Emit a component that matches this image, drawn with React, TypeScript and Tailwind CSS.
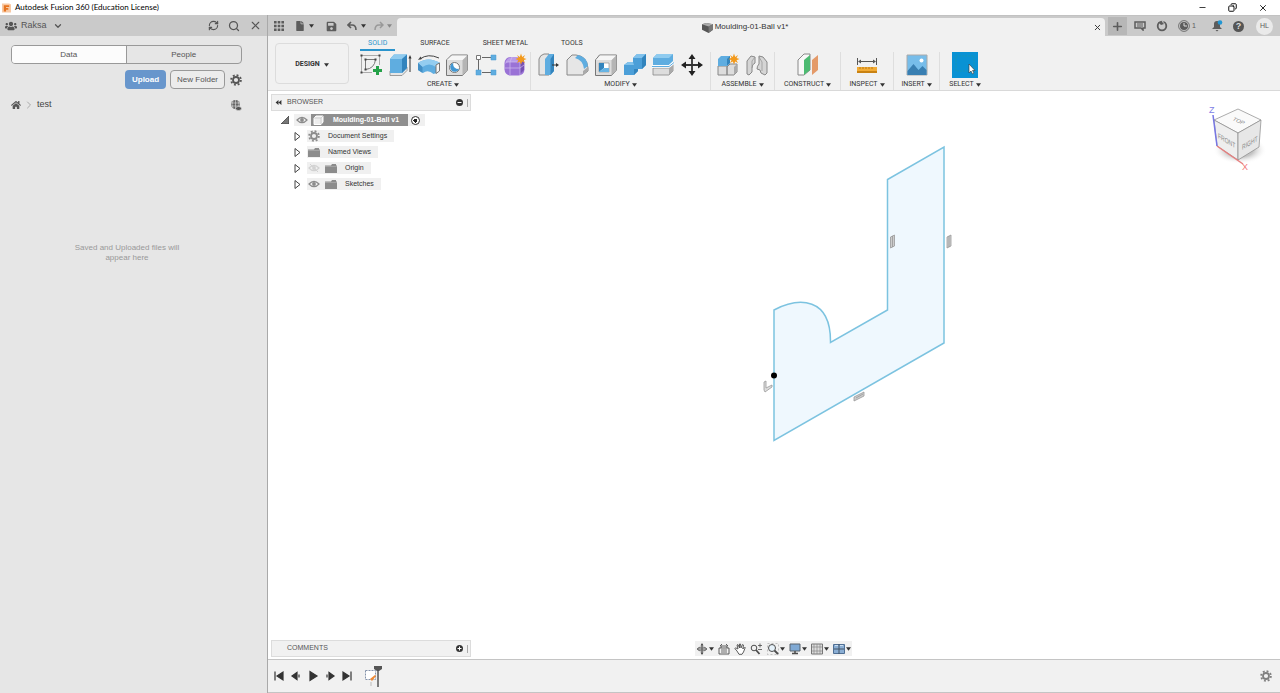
import type { ReactNode } from "react";
import { FaFile, FaHome, FaSave, FaUsers } from "react-icons/fa";
import { ChevronDown, ChevronRight, Copy, Minus, Plus, RefreshCw, Search, X } from "lucide-react";

interface ToolGroupData {
  label: string;
  width: string;
  cols: string;
  tools: { name: string; icon: ReactNode }[];
}

const BLUE = "#5fade0";
const DARK = "#4d4d4d";

const Icon = ({ children, className = "h-6 w-6", box = "0 0 24 24" }: { children: ReactNode; className?: string; box?: string }) => (
  <svg viewBox={box} className={className} fill="none" aria-hidden="true">
    {children}
  </svg>
);

const Caret = ({ className = "text-[#333]" }: { className?: string }) => (
  <Icon box="0 0 6 4" className={`h-1 w-[5px] shrink-0 ${className}`}>
    <path d="M0 0h6L3 4z" fill="currentColor" />
  </Icon>
);

const Gear = ({ className }: { className: string }) => (
  <Icon box="0 0 12 12" className={className}>
    <circle cx="6" cy="6" r="3" stroke="currentColor" strokeWidth="1.8" />
    <circle cx="6" cy="6" r="4.9" stroke="currentColor" strokeWidth="1.8" strokeDasharray="1.9 1.95" />
  </Icon>
);

const Eye = ({ off = false }: { off?: boolean }) => (
  <Icon box="0 0 12 8" className={`h-2 w-3 shrink-0 ${off ? "text-[#d2d2d2]" : "text-[#8b8b8b]"}`}>
    <path d="M1 4Q6-1.4 11 4Q6 9.4 1 4z" stroke="currentColor" strokeWidth="1.2" />
    <circle cx="6" cy="4" r="1.9" fill="currentColor" />
    {off && <path d="M2 0l8 8" stroke="currentColor" />}
  </Icon>
);

const Folder = () => (
  <Icon box="0 0 12 9" className="h-[9px] w-3 shrink-0">
    <path d="M0 1.5h6L7 0h4v1.5h1V9H0z" fill="#8c8c8c" />
    <path d="M0 2.5h12" stroke="#b5b5b5" strokeWidth=".6" />
  </Icon>
);

const Spark = ({ x, y }: { x: number; y: number }) => (
  <path
    transform={`translate(${x} ${y})`}
    d="M0-5.5 1.2-2 4-4 2.5-1 5.5 0 2.5 1.2 4 4 1.2 2.5 0 5.5-1.2 2.5-4 4-2.5 1.2-5.5 0-2.5-1.2-4-4-1.2-2z"
    fill="#f39a1c"
  />
);

const groups: ToolGroupData[] = [
  {
    label: "CREATE",
    width: "w-[175px]",
    cols: "grid-cols-6 w-[172px]",
    tools: [
      {
        name: "Create Sketch",
        icon: (
          <Icon>
            <path d="M2.500 2.500h18v17h-18z" stroke="#999" strokeWidth=".8" />
            <path d="M6.500 6.500v10q9-1 10-10z" stroke="#777" />
            <path d="M1.500 1.500h2v2h-2zM19.500 1.500h2v2h-2zM1.500 18.500h2v2h-2zM5.500 5.500h2v2h-2zM5.500 15.500h2v2h-2zM15.500 5.500h2v2h-2z" fill="#444" />
            <path d="M18.500 12v11M13 17.500h11" stroke="#f1f1f1" strokeWidth="5" />
            <path d="M18.500 13v9M14 17.500h9" stroke="#24a148" strokeWidth="3" />
          </Icon>
        ),
      },
      {
        name: "Extrude",
        icon: (
          <Icon>
            <path d="M2 18v4.500h12l5-5V14z" fill="#e6e6e6" stroke="#888" strokeWidth=".8" />
            <path d="M2 6l4-4.500h13v13.500l-5 5H2z" fill={BLUE} />
            <path d="M2 6l4-4.500h13L14 6z" fill="#8fcbef" />
            <path d="M14 6l5-4.500v13.500l-5 5z" fill="#3284bd" />
            <path d="M22 19V4" stroke="#333" />
            <path d="M20.500 5.500L22 2l1.500 3.500z" fill="#333" />
          </Icon>
        ),
      },
      {
        name: "Revolve",
        icon: (
          <Icon>
            <path d="M3 6Q11 0 22 5" stroke="#444" />
            <path d="M1 7l2.500-3.500L5 6z" fill="#444" />
            <path d="M1 10Q11 3 23 10l-3.500 4v6l-3 1Q11 16 6 20L1 17z" fill={BLUE} />
            <path d="M1 10Q11 3 23 10l-4 4Q12 9 5.500 14z" fill="#94cdf0" />
            <path d="M5.500 14v6L1 17v-7z" fill="#438fc5" />
            <path d="M19 12l3.500-2v8L19 20.500z" fill="#f5f5f5" stroke="#777" />
          </Icon>
        ),
      },
      {
        name: "Hole",
        icon: (
          <Icon>
            <path d="M1.500 7l5-5h16v15l-5 5.500h-16z" fill="#ddd" stroke="#777" />
            <path d="M17.500 7l5-5v15l-5 5.500z" fill="#b5b5b5" />
            <path d="M2 7l5-4.500h15L17.500 7z" fill="#f6f6f6" />
            <circle cx="9.500" cy="14.500" r="5" fill="#fff" stroke="#777" />
            <path d="M8 10a4.600 4.600 0 1 0 6 6Q8 16 8 10z" fill="#4297d2" />
          </Icon>
        ),
      },
      {
        name: "Rectangular Pattern",
        icon: (
          <Icon>
            <path d="M4.500 7v10M8 4.500h9M8 19.500h9" stroke="#666" />
            <path d="M2.500 2.500h4v4h-4z" fill="#fff" stroke="#777" />
            <path d="M17 2h5v5h-5zM17 17h5v5h-5zM2 17h5v5H2z" fill={BLUE} stroke="#4a9bd2" strokeWidth=".5" />
          </Icon>
        ),
      },
      {
        name: "Create Form",
        icon: (
          <Icon>
            <rect x="1.500" y="4" width="20" height="18.500" rx="6" fill="#9a72d6" />
            <path d="M2 11Q3 5 9 4h8l-3 5H5z" fill="#b99be8" />
            <path d="M17 9l4-3v11l-4 4z" fill="#7651b3" />
            <path d="M2 15h15l4-3M9 4L7 9v13M17 9v13M3 9h14" stroke="#d1bdf0" strokeWidth=".7" />
            <Spark x={18} y={6} />
          </Icon>
        ),
      },
    ],
  },
  {
    label: "MODIFY",
    width: "w-[180px]",
    cols: "grid-cols-6 w-[172px]",
    tools: [
      {
        name: "Press Pull",
        icon: (
          <Icon>
            <path d="M2 6q1-4 5-5h5v21H2z" fill="#e5e5e5" stroke="#888" />
            <path d="M8 6l4-5h5v17l-3.500 4H8z" fill={BLUE} />
            <path d="M13.500 6L17 1v17l-3.500 4z" fill="#3284bd" />
            <path d="M15 12h5" stroke="#333" />
            <path d="M19 10l3 2-3 2z" fill="#333" />
          </Icon>
        ),
      },
      {
        name: "Fillet",
        icon: (
          <Icon>
            <path d="M2 7l5-5h4q11 1 12 13v3l-5 4H2z" fill="#e6e6e6" stroke="#888" />
            <path d="M18 18v4l5-4v-4z" fill="#aaa" />
            <path d="M10 5l3-3q9 2 10 11l-4 3Q18 7 10 5z" fill={BLUE} />
          </Icon>
        ),
      },
      {
        name: "Shell",
        icon: (
          <Icon>
            <path d="M1.500 7l4-5h17v15l-5 5.500h-16z" fill="#ddd" stroke="#777" />
            <path d="M17.500 7l5-5v15l-5 5.500z" fill="#b5b5b5" />
            <path d="M2 7l4-4.500h16L17.500 7z" fill="#f6f6f6" />
            <path d="M5 10h10v9H5z" fill="#fff" stroke="#888" strokeWidth=".6" />
            <path d="M5 10l5 0v5l-5 4z" fill="#3284bd" />
            <path d="M5 19l5-4h5v4z" fill="#66b4e4" />
          </Icon>
        ),
      },
      {
        name: "Combine",
        icon: (
          <Icon>
            <path d="M1 12l4-3h5V5l4-4h9v11l-4 4h-4v2l-4 4H1z" fill="#4c9fd8" />
            <path d="M1 12l4-3h5l1 3zM10 5l4-4h9l-4 4z" fill="#81c2ec" />
            <path d="M19 5l4-4v11l-4 4zM15 16v2l-4 4v-6z" fill="#3284bd" />
          </Icon>
        ),
      },
      {
        name: "Split Body",
        icon: (
          <Icon>
            <path d="M2 5l4-4h16v7l-4 4H2z" fill={BLUE} />
            <path d="M2 5l4-4h16l-4 4z" fill="#8fcbef" />
            <path d="M2 15h16l4-4v7l-4 4H2z" fill="#ddd" stroke="#888" strokeWidth=".8" />
            <path d="M18 15l4-4v7l-4 4z" fill="#aaa" />
            <path d="M1 13.500h17l5-4" stroke="#fff" strokeWidth="2.500" />
            <path d="M1 13.500h17l5-4" stroke={BLUE} strokeWidth="1" />
          </Icon>
        ),
      },
      {
        name: "Move/Copy",
        icon: (
          <Icon>
            <path d="M12 4v16M4 12h16" stroke="#333" strokeWidth="1.800" />
            <path d="M8.500 6L12 1l3.500 5zM8.500 18l3.500 5 3.500-5zM6 8.500L1 12l5 3.500zM18 8.500l5 3.500-5 3.500z" fill="#222" />
          </Icon>
        ),
      },
    ],
  },
  {
    label: "ASSEMBLE",
    width: "w-16",
    cols: "grid-cols-2 w-[58px]",
    tools: [
      {
        name: "New Component",
        icon: (
          <Icon>
            <path d="M2 13h9v9H2zM11 14l3-3h7v8l-3 3h-7z" fill="#ddd" stroke="#888" />
            <path d="M18 14l3-3v8l-3 3z" fill="#aaa" />
            <path d="M2 6l3-3h9v7l-3 3H2z" fill={BLUE} />
            <path d="M11 6l3-3v7l-3 3z" fill="#3284bd" />
            <Spark x={18} y={6} />
          </Icon>
        ),
      },
      {
        name: "Joint",
        icon: (
          <Icon>
            <path d="M2 8l4-5 4 1v6q-3 1-3 5v4l-3 3-2-1z" fill="#d5d5d5" stroke="#888" />
            <path d="M22 9l-4-5-4-1v8q-2 2-2 5l3 1 1 3 4 2 2-2z" fill="#d5d5d5" stroke="#888" />
            <path d="M10 4L7 8v7M14 4l3 5v9" stroke="#999" strokeWidth=".8" />
          </Icon>
        ),
      },
    ],
  },
  {
    label: "CONSTRUCT",
    width: "w-[66px]",
    cols: "grid-cols-1 w-8",
    tools: [
      {
        name: "Offset Plane",
        icon: (
          <Icon>
            <path d="M2 7l6-6h6v16l-6 5H2z" fill="#f8f8f8" stroke="#888" />
            <path d="M8 7l6-5v15l-6 5z" fill="#4dbb72" />
            <path d="M16 7l6-5v15l-6 5z" fill="#e49a69" />
          </Icon>
        ),
      },
    ],
  },
  {
    label: "INSPECT",
    width: "w-[53px]",
    cols: "grid-cols-1 w-8",
    tools: [
      {
        name: "Measure",
        icon: (
          <Icon>
            <path d="M2.500 5v7M21.500 5v7M4 8.500h16" stroke="#555" />
            <path d="M3 8.500l3-2v4zM21 8.500l-3-2v4z" fill="#555" />
            <path d="M2 14h20v5H2z" fill="#f2ab35" />
            <path d="M2 18h20v2H2z" fill="#c98212" />
            <path d="M5 14v2M8 14v2M11 14v2M14 14v2M17 14v2" stroke="#a86505" strokeWidth=".7" />
          </Icon>
        ),
      },
    ],
  },
  {
    label: "INSERT",
    width: "w-[46px]",
    cols: "grid-cols-1 w-8",
    tools: [
      {
        name: "Insert Image",
        icon: (
          <Icon>
            <path d="M2 2h20v20H2z" fill="#77bdea" stroke="#aaa" />
            <path d="M2.500 18l6-7 5 6 4-4 4 4v5h-19z" fill="#397fb2" />
            <circle cx="16.500" cy="7.500" r="2" fill="#fff" />
          </Icon>
        ),
      },
    ],
  },
  {
    label: "SELECT",
    width: "w-[50px]",
    cols: "grid-cols-1 w-8",
    tools: [
      {
        name: "Select",
        icon: (
          <Icon className="h-[26px] w-[26px]" box="0 0 26 26">
            <path d="M0 0h26v26H0z" fill="#0992d4" />
            <path d="M4 4h18v15H4z" stroke="#1695b8" strokeDasharray="2 1" />
            <path d="M17 12v9l2-2 1.500 3 1.500-1-1.500-2.500H23z" fill="#fff" stroke="#333" strokeWidth=".6" />
          </Icon>
        ),
      },
    ],
  },
];

const treeRows = [
  { label: "Document Settings", icon: <Gear className="h-3 w-3 text-[#8c8c8c]" />, eye: "" },
  { label: "Named Views", icon: <Folder />, eye: "" },
  { label: "Origin", icon: <Folder />, eye: "off" },
  { label: "Sketches", icon: <Folder />, eye: "on" },
];

function TitleBar() {
  return (
    <header className="flex h-[15px] shrink-0 items-center bg-white pl-[2px] font-['Lato',sans-serif] text-black">
      <Icon box="0 0 10 10" className="mr-1 h-[10px] w-[9px]">
        <path d="M0 0h8l2 1v9H0z" fill="#f8c9a4" />
        <path d="M2 9V2h6v2H4.500v1H7v2H4.500v2z" fill="#e67420" />
      </Icon>
      <h1 className="flex-1 whitespace-nowrap text-[8px] leading-[15px]">Autodesk Fusion 360 (Education License)</h1>
      <div className="flex items-center gap-[21px] pr-3">
        <button aria-label="Minimize"><Minus size={9} strokeWidth={2} /></button>
        <button aria-label="Restore"><Copy size={9} strokeWidth={2.500} className="-scale-x-100" /></button>
        <button aria-label="Close"><X size={10} strokeWidth={2} /></button>
      </div>
    </header>
  );
}

function DataPanel() {
  return (
    <aside className="flex w-[268px] shrink-0 flex-col border-r border-[#a9a9a9] bg-[#e6e6e6] text-[8px] text-[#555]">
      <div className="flex h-[21px] items-center bg-[#cacaca] pl-[5px] pr-[5px]">
        <button className="flex items-center text-[9px]">
          <FaUsers size={12} className="mr-1" />
          Raksa
          <ChevronDown size={10} strokeWidth={3} className="ml-[6px]" />
        </button>
        <div className="ml-auto flex items-center gap-[9px]">
          <button aria-label="Refresh"><RefreshCw size={11} strokeWidth={2.500} /></button>
          <button aria-label="Search"><Search size={12} strokeWidth={2.500} /></button>
          <button aria-label="Close panel"><X size={13} strokeWidth={2} /></button>
        </div>
      </div>
      <div className="flex flex-col pl-[11px] pr-[25px] pt-[9px]">
        <div className="grid h-[19px] grid-cols-2 overflow-hidden rounded-sm border border-[#999]">
          <button className="border-r border-[#999] bg-[#fcfcfc]">Data</button>
          <button>People</button>
        </div>
        <div className="mt-[6px] flex items-center justify-end">
          <button className="h-[19px] rounded-sm bg-[#6896cc] px-[7px] font-bold text-white">Upload</button>
          <button className="ml-1 h-[19px] rounded-sm border border-[#999] bg-[#ececec] px-[6px]">New Folder</button>
          <button aria-label="Settings" className="ml-[5px]"><Gear className="h-3 w-3 text-[#555]" /></button>
        </div>
        <nav className="mt-2 flex h-4 items-center">
          <a href="#home" aria-label="Home"><FaHome size={10} /></a>
          <ChevronRight size={12} className="mx-[2px] text-[#aaa]" />
          <a href="#test" className="text-[9px] text-[#444]">test</a>
          <button aria-label="Open on the web" className="ml-auto">
            <Icon box="0 0 12 12" className="h-3 w-3">
              <circle cx="5.500" cy="5.500" r="4.500" fill="#666" />
              <path d="M1 4h9M1 7h9M5.500 1v9M3 2q-2 3.500 0 7M8 2q2 3.500 0 7" stroke="#ddd" strokeWidth=".6" />
              <ellipse cx="8.500" cy="9.500" rx="3" ry="2" fill="#555" stroke="#e6e6e6" strokeWidth=".6" />
            </Icon>
          </button>
        </nav>
      </div>
      <p className="mt-[130px] self-center pr-[13px] text-center leading-[10px] text-[#999]">
        Saved and Uploaded files will
        <br />
        appear here
      </p>
    </aside>
  );
}

function DocumentBar() {
  return (
    <div className="flex h-[21px] shrink-0 items-end border-t border-[#c2c2c2] bg-[#cacaca] text-[#5c5c5c]">
      <div className="flex h-5 w-[129px] items-center pl-[6px]">
        <button aria-label="Show data panel">
          <Icon box="0 0 10 10" className="h-[10px] w-[10px]">
            <path d="M0 0h2.600v2.600H0zM3.700 0h2.600v2.600H3.700zM7.400 0H10v2.600H7.400zM0 3.700h2.600v2.600H0zM3.700 3.700h2.600v2.600H3.700zM7.400 3.700H10v2.600H7.400zM0 7.400h2.600V10H0zM3.700 7.400h2.600V10H3.700zM7.400 7.400H10V10H7.400z" fill="#5c5c5c" />
          </Icon>
        </button>
        <button aria-label="File" className="ml-[11px] flex items-center gap-1"><FaFile size={10} /><Caret /></button>
        <button aria-label="Save" className="ml-3"><FaSave size={11} /></button>
        <button aria-label="Undo" className="ml-[10px] flex items-center gap-1">
          <Icon box="0 0 10 10" className="h-[10px] w-[10px]"><path d="M4 1L1 4l3 3M1.500 4H5q4 0 4 5" stroke="currentColor" strokeWidth="1.600" /></Icon>
          <Caret />
        </button>
        <button aria-label="Redo" className="ml-2 flex items-center gap-[3px] text-[#999]">
          <Icon box="0 0 10 10" className="h-[10px] w-[10px]"><path d="M6 1l3 3-3 3M8.500 4H5Q1 4 1 9" stroke="currentColor" strokeWidth="1.500" /></Icon>
          <Caret className="text-[#888]" />
        </button>
      </div>
      <div className="flex h-[18px] flex-1 items-center rounded-t-sm bg-[#f1f1f1] pr-[3px] text-[8px] text-[#333]">
        <div className="flex flex-1 items-center justify-center gap-[2px]">
          <Icon box="0 0 10 10" className="h-[11px] w-[11px]">
            <path d="M0 2l4-1 6 1v5L6 10 0 7z" fill="#555" />
            <path d="M0 2l4-1 6 1-4 2z" fill="#aaa" />
            <path d="M6 4l4-2v5l-4 3z" fill="#777" />
          </Icon>
          Moulding-01-Ball v1*
        </div>
        <button aria-label="Close document"><X size={9} strokeWidth={2.500} /></button>
      </div>
      <div className="flex h-5 items-center pl-[3px] pr-[7px]">
        <button aria-label="New design" className="flex h-[18px] w-[19px] items-center justify-center bg-[#b7b7b7]"><Plus size={13} strokeWidth={3} /></button>
        <button aria-label="Notifications" className="ml-[7px]">
          <Icon box="0 0 12 10" className="h-[10px] w-3">
            <path d="M1 1h10v6H9v2L7 7H1z" stroke="currentColor" strokeWidth="1.500" />
            <path d="M3 3h6M3 5h6" stroke="currentColor" />
          </Icon>
        </button>
        <button aria-label="Extensions" className="ml-[10px]">
          <Icon box="0 0 12 12" className="h-3 w-3">
            <circle cx="6" cy="6" r="4.300" stroke="currentColor" strokeWidth="1.800" />
            <path d="M2 2h4l2 2-3 1z" fill="currentColor" />
            <path d="M6 .500l1.500 2" stroke="#cacaca" strokeWidth="1.200" />
          </Icon>
        </button>
        <button aria-label="Job status" className="ml-[10px] flex items-center gap-[2px] text-[7px]">
          <Icon box="0 0 12 12" className="h-3 w-3">
            <circle cx="6" cy="6" r="5.400" stroke="currentColor" strokeWidth=".8" />
            <circle cx="6" cy="6" r="4" fill="currentColor" />
            <path d="M6 3v3h3" stroke="#ddd" />
          </Icon>
          1
        </button>
        <button aria-label="Alerts" className="ml-[15px]">
          <Icon box="0 0 12 12" className="h-3 w-3">
            <path d="M1 9l2-2V4q0-3 3-3t3 3v3l2 2zM4.500 10h3L6 11.500z" fill="currentColor" />
            <circle cx="9" cy="2.500" r="2.300" fill="#2196d3" />
          </Icon>
        </button>
        <button aria-label="Help" className="ml-[10px] flex h-[11px] w-[11px] items-center justify-center rounded-full bg-[#555] text-[9px] font-bold leading-none text-[#ddd]">?</button>
        <button aria-label="Account" className="ml-3 flex h-[17px] w-[17px] items-center justify-center rounded-full bg-[#eaeaea] text-[7px]">HL</button>
      </div>
    </div>
  );
}

function Toolbar() {
  return (
    <div className="flex h-[55px] shrink-0 border-b border-[#d9d9d9] bg-[#f1f1f1] font-['Roboto',sans-serif] text-[7px] text-[#333]">
      <button className="ml-[7px] mt-[7px] flex h-[41px] w-[74px] items-center justify-center gap-1 rounded-sm border border-[#dcdcdc] pt-[2px] font-bold">
        DESIGN <Caret />
      </button>
      <div className="ml-[7px] flex flex-col">
        <nav className="ml-1 flex h-4 gap-[17px]">
          <button className="border-b-2 border-[#2b94cc] px-2 pt-[2px] text-[#2b94cc]">SOLID</button>
          <button className="border-b-2 border-transparent px-2 pt-[2px]">SURFACE</button>
          <button className="border-b-2 border-transparent px-2 pt-[2px]">SHEET METAL</button>
          <button className="border-b-2 border-transparent px-2 pt-[2px]">TOOLS</button>
        </nav>
        <div className="mt-[1px] flex">
          {groups.map((group, i) => (
            <div key={group.label} className={`flex flex-col items-center ${group.width} ${i < groups.length - 1 ? "border-r border-[#dedede]" : ""}`}>
              <div className={`grid h-[26px] place-items-center ${group.cols}`}>
                {group.tools.map((tool) => (
                  <button key={tool.name} aria-label={tool.name}>{tool.icon}</button>
                ))}
              </div>
              <button className="flex h-3 items-center gap-[2px] pt-[1px]">{group.label} <Caret /></button>
            </div>
          ))}
        </div>
      </div>
    </div>
  );
}

function PanelHeader({ title, open }: { title: string; open: boolean }) {
  return (
    <div className="flex h-[17px] w-[200px] items-center border border-[#dcdcdc] bg-[#f1f1f1] text-[7px] text-[#555]">
      <span className="w-[15px] pl-[3px]">
        {open && (
          <Icon box="0 0 7 6" className="h-[5px] w-[7px]"><path d="M3.500 0v6L0 3zM7 0v6L3.500 3z" fill="#333" /></Icon>
        )}
      </span>
      <h2 className="flex-1">{title}</h2>
      <button aria-label={`Toggle ${title.toLowerCase()}`}>
        <Icon box="0 0 7 7" className="h-[7px] w-[7px]">
          <circle cx="3.500" cy="3.500" r="3.500" fill="#333" />
          <path d={open ? "M1.500 3.500h4" : "M1.500 3.500h4M3.500 1.500v4"} stroke="#fff" />
        </Icon>
      </button>
      <span className="ml-1 mr-[1px] h-2 w-[2px] border-l border-[#aaa]" />
    </div>
  );
}

function BrowserTree() {
  return (
    <ul className="mt-[1px] text-[7px] text-[#333]">
      <li className="flex h-4 items-center pl-[10px]">
        <Icon box="0 0 8 8" className="h-2 w-2"><path d="M8 0v8H0z" fill="#777" stroke="#333" strokeWidth=".7" /></Icon>
        <div className="ml-[5px] flex h-3 items-center bg-[#f0f0f0] pl-[2px] pr-[5px]">
          <Eye />
          <div className="ml-[3px] flex h-3 items-center bg-[#8f8f8f] pl-[2px] pr-[9px] font-bold text-white">
            <Icon box="0 0 11 10" className="mr-[9px] h-[10px] w-[11px]">
              <path d="M1 3l2-2h7v6L8 9.500H1z" fill="#eee" stroke="#fff" />
              <path d="M1 3h7v6M8 3l2-2" stroke="#bbb" strokeWidth=".6" />
            </Icon>
            Moulding-01-Ball v1
          </div>
          <input type="radio" aria-label="Activate component" defaultChecked className="ml-[3px] h-[9px] w-[9px] appearance-none rounded-full border border-[#333] bg-[radial-gradient(circle,#222_0_2px,#fff_2px)]" />
        </div>
      </li>
      {treeRows.map((row) => (
        <li key={row.label} className="flex h-4 items-center pl-[23px]">
          <Icon box="0 0 7 9" className="h-[9px] w-[7px]"><path d="M1 .500v8L6 4.500z" fill="#fff" stroke="#444" /></Icon>
          <div className="ml-[6px] flex h-3 items-center bg-[#f0f0f0] pl-[1px] pr-[7px]">
            {row.eye && <span className="mr-[5px]"><Eye off={row.eye === "off"} /></span>}
            <span className="flex w-3 justify-center">{row.icon}</span>
            <span className="pl-2">{row.label}</span>
          </div>
        </li>
      ))}
    </ul>
  );
}

function SketchCanvas() {
  return (
    <svg viewBox="268 91 1012 568" className="absolute inset-0 h-full w-full" role="img" aria-label="Moulding profile sketch">
      <path d="M774 440.500V310C799 297 831 297 830.500 342.500L887.500 310V179.500L944 147V343z" fill="#eff8fe" stroke="#7cc3e0" strokeWidth="1.500" />
      <circle cx="774" cy="375.500" r="3" fill="#000" />
      <g fill="#ccc" stroke="#999" strokeWidth=".8">
        <path d="M890.500 237l4-2v11l-4 2zM947 237l4-2v11l-4 2zM854 397l10-5v4l-10 5z" />
        <path d="M764 382l2-1v7l6-3v2l-7 5-1-2z" fill="#ddd" />
      </g>
      <path d="M892.500 236v11M949 236v11M856 398l7-4" stroke="#888" strokeWidth=".6" />
    </svg>
  );
}

function ViewCube() {
  return (
    <svg viewBox="0 0 64 72" className="absolute right-[8px] top-[10px] h-[72px] w-16" role="img" aria-label="View cube">
      <defs>
        <radialGradient id="cubeShadow">
          <stop offset=".5" stopColor="#c4c4c4" />
          <stop offset="1" stopColor="#fff" stopOpacity="0" />
        </radialGradient>
      </defs>
      <ellipse cx="32" cy="49" rx="27" ry="14" fill="url(#cubeShadow)" />
      <path d="M6 19l24-11 23 11-23 13z" fill="#fafafa" stroke="#888" strokeWidth=".7" />
      <path d="M6 19l24 13v27L9 45z" fill="#eee" stroke="#888" strokeWidth=".7" />
      <path d="M30 32l23-13-2 27-21 13z" fill="#e7e7e7" stroke="#888" strokeWidth=".7" />
      <path d="M5 14l4 31" stroke="#7777e5" strokeWidth="1.500" />
      <path d="M9 45l26 18" stroke="#e77f7f" strokeWidth="1.500" />
      <g className="font-['Liberation_Sans',sans-serif]" fontSize="6" fill="#888">
        <text transform="matrix(.9 .4 -.6 .7 24 19)">TOP</text>
        <text transform="matrix(.84 .5 0 1.200 10 37)">FRONT</text>
        <text transform="matrix(.84 -.5 0 1.200 34 49)">RIGHT</text>
      </g>
      <text x="1" y="12" fontSize="9" fill="#8080e6" className="font-['Liberation_Sans',sans-serif]">Z</text>
      <text x="34" y="69" fontSize="9" fill="#f07878" className="font-['Liberation_Sans',sans-serif]">X</text>
    </svg>
  );
}

const viewTools = [
  { name: "Orbit", caret: true, art: <><path d="M6 1v10M1 6h10" stroke={DARK} strokeWidth="1" /><ellipse cx="6" cy="6" rx="4.500" ry="2" stroke={DARK} strokeWidth=".8" /><path d="M4.500 2.500L6 0l1.500 2.500zM4.500 9.500L6 12l1.500-2.500z" fill={DARK} /></> },
  { name: "Look At", caret: false, art: <><path d="M1 5h10v6H1zM3 5V3h6v2M2 3l2-2M8 1l2 2" stroke={DARK} strokeWidth=".9" /><path d="M3 7h6M3 9h6" stroke={DARK} strokeWidth=".8" /></> },
  { name: "Pan", caret: false, art: <path d="M3 8L.8 5.500l1-.6L4 6 3 2l1-.4L5.500 5 5.500 1h1L7 5l1.500-3.500 1 .5L8.800 6l1.700-2 .7.700L9.500 9 8 11.300H5z" fill="#fff" stroke={DARK} strokeWidth=".9" /> },
  { name: "Zoom", caret: false, art: <><circle cx="4" cy="5" r="2.800" stroke={DARK} /><path d="M6 7l3.500 4" stroke={DARK} strokeWidth="1.800" /><path d="M8 2.500h4M10 .500v4M8 6.500h4" stroke={DARK} strokeWidth=".8" /></> },
  { name: "Fit", caret: true, art: <><path d="M.5.500h11v11H.5z" stroke="#aaa" strokeDasharray="2 2" strokeWidth=".7" /><circle cx="5" cy="5" r="3.500" fill="#e6f2fa" stroke={DARK} /><path d="M7.500 7.500L11 11" stroke={DARK} strokeWidth="1.800" /></> },
  { name: "Display Settings", caret: true, art: <><path d="M1 1h10v7H1z" fill="#7fa9d4" stroke="#59626c" /><path d="M6 8v2M3 10.500h6" stroke={DARK} strokeWidth="1.500" /></> },
  { name: "Grid and Snaps", caret: true, art: <><path d="M.5 1h11v10H.5z" fill="#ddd" stroke="#777" /><path d="M3 1v10M6 1v10M9 1v10M1 4h10M1 8h10" stroke="#888" strokeWidth=".7" /></> },
  { name: "Viewports", caret: true, art: <><path d="M.5 1.500h11v9H.5z" fill="#8aaed4" stroke="#4f6f94" /><path d="M6 1v10M1 6h10" stroke="#456" /><path d="M7 2.500h3M2 2.500h3" stroke="#cde" /></> },
];

function NavigationBar() {
  return (
    <div className="absolute bottom-[3px] left-[427px] flex h-[15px] w-[157px] items-center justify-between bg-[#f1f1f1] px-[1px]">
      {viewTools.map((tool) => (
        <button key={tool.name} aria-label={tool.name} className="flex items-center gap-[1px]">
          <Icon box="0 0 12 12" className="h-3 w-3">{tool.art}</Icon>
          {tool.caret && <Caret />}
        </button>
      ))}
    </div>
  );
}

const playback = [
  { name: "Go to start", d: "M2 1.500v9M10 2v8L4 6z" },
  { name: "Step back", d: "M7 2.500v7L2 6zM9 4.500v3" },
  { name: "Play", d: "M3 1.500v9L10 6z" },
  { name: "Step forward", d: "M5 2.500v7l5-3.500zM3 4.500v3" },
  { name: "Go to end", d: "M2 2v8l6-4zM10 1.500v9" },
];

function Timeline() {
  return (
    <footer className="flex h-[34px] shrink-0 items-center border-y border-[#c4c4c4] bg-[#f1f1f1] pl-[5px] pr-2">
      <div className="flex items-center gap-[5px]">
        {playback.map((item) => (
          <button key={item.name} aria-label={item.name}>
            <Icon box="0 0 12 12" className="h-3 w-3"><path d={item.d} fill="#333" stroke="#333" strokeWidth="1.200" /></Icon>
          </button>
        ))}
      </div>
      <button aria-label="Sketch1" className="ml-[10px]">
        <Icon box="0 0 20 24" className="h-6 w-5">
          <path d="M2.500 6.500h10v9h-10z" fill="#fff" stroke="#8493ab" strokeDasharray="2 1" />
          <path d="M7 15l5-4 1 1-4 5z" fill="#ef8a35" />
          <path d="M8 18v4" stroke="#bbb" />
          <path d="M11 2h8v3l-3 2h-2l-3-2z" fill="#555" />
          <path d="M15 5v18" stroke="#555" strokeWidth="1.500" />
        </Icon>
      </button>
      <button aria-label="Timeline settings" className="ml-auto"><Gear className="h-3 w-3 text-[#808080]" /></button>
    </footer>
  );
}

export default function App() {
  return (
    <div className="flex h-screen flex-col overflow-hidden bg-white font-['Liberation_Sans',Arial,sans-serif]">
      <TitleBar />
      <div className="flex min-h-0 flex-1">
        <DataPanel />
        <div className="flex min-w-0 flex-1 flex-col">
          <DocumentBar />
          <Toolbar />
          <main className="relative flex min-h-0 flex-1 flex-col items-start justify-between bg-white pb-[2px] pl-[3px] pt-[3px]">
            <SketchCanvas />
            <section className="relative">
              <PanelHeader title="BROWSER" open />
              <BrowserTree />
            </section>
            <section className="relative">
              <PanelHeader title="COMMENTS" open={false} />
            </section>
            <ViewCube />
            <NavigationBar />
          </main>
          <Timeline />
        </div>
      </div>
    </div>
  );
}
